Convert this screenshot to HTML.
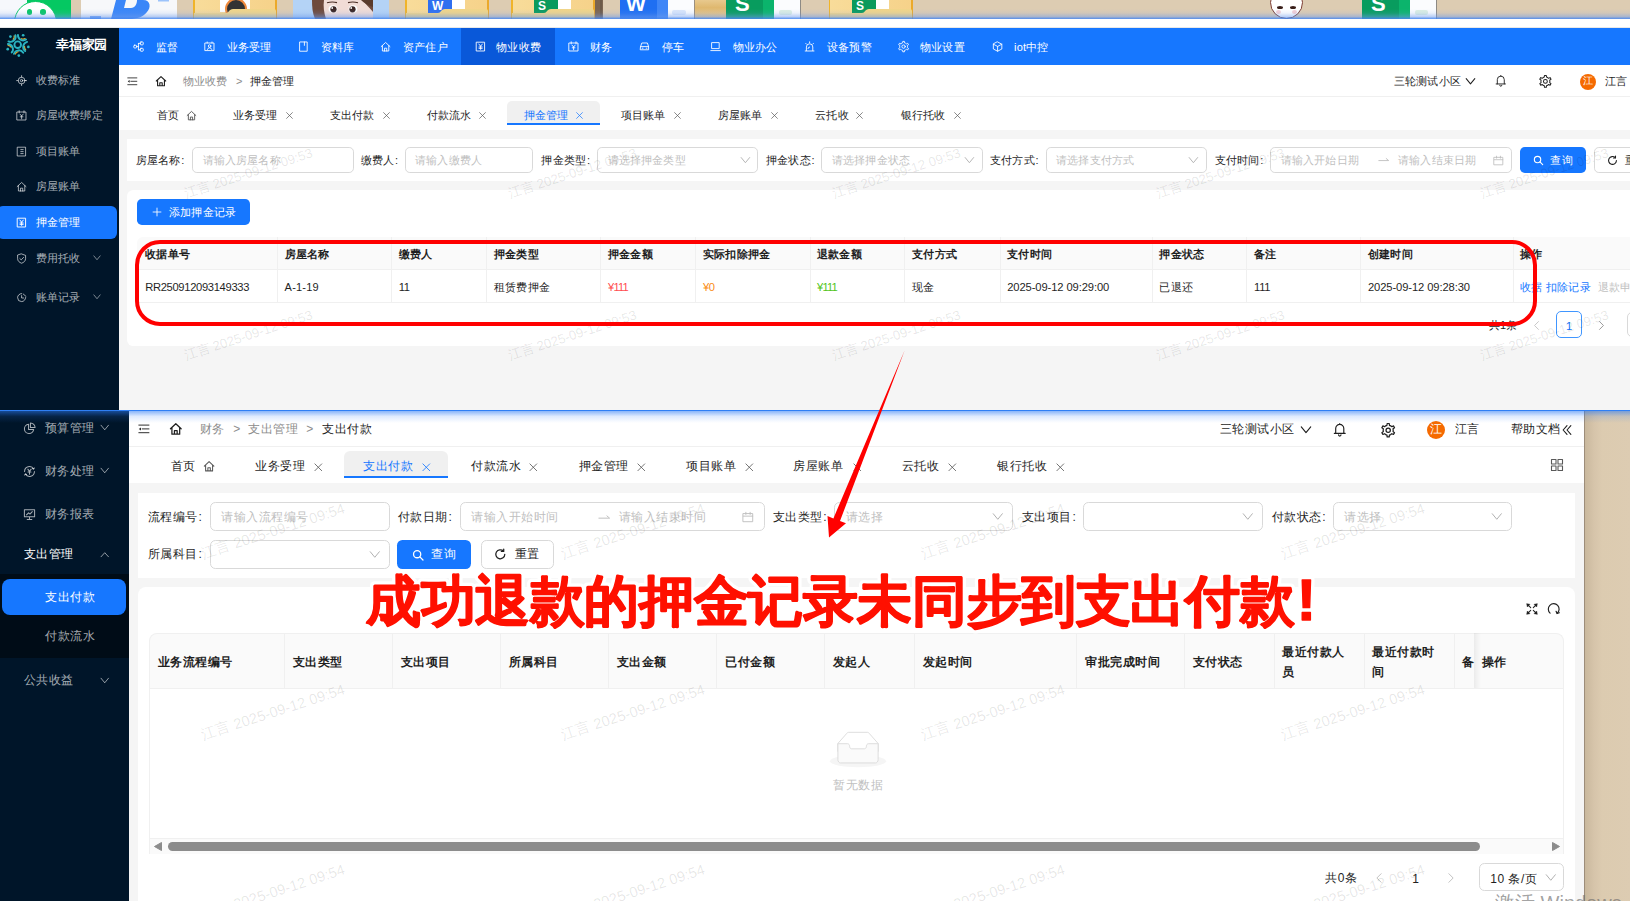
<!DOCTYPE html><html><head><meta charset="utf-8"><style>
html,body{margin:0;padding:0;width:1630px;height:901px;overflow:hidden;background:#fff;font-family:'Liberation Sans', sans-serif;}
.a{position:absolute;box-sizing:border-box;}
.t{position:absolute;white-space:nowrap;line-height:20px;height:20px;}
svg.a{overflow:visible}
</style></head><body>
<div class="a" style="left:0.0px;top:0.0px;width:1630.0px;height:19.0px;background:#ddccb2"></div>
<div class="a" style="left:0.0px;top:0.0px;width:71.0px;height:19.0px;background:#f6f8fc"></div>
<div class="a" style="left:27.0px;top:0.0px;width:44.0px;height:19.0px;background:#05c862"></div>
<div class="a" style="left:14px;top:0.7px;width:43.1px;height:43.1px;border-radius:50%;background:#fff;border:1.8px solid #05c862"></div>
<div class="a" style="left:26.8px;top:9.3px;width:5.4px;height:5.4px;background:#05c862;border-radius:50%"></div>
<div class="a" style="left:40.4px;top:9.3px;width:5.4px;height:5.4px;background:#05c862;border-radius:50%"></div>
<div class="a" style="left:81.0px;top:0.0px;width:96.0px;height:19.0px;background:#f7f8fa"></div>
<svg class="a" style="left:81px;top:0" width="96" height="19" viewBox="0 0 96 19"><path d="M35 0 H62 C70 0 70 8 66 12 C62 17 56 19 48 19 H30 L35 0 Z M45 0 L43 8 H50 C54 8 56 4 56 0 Z" fill="#3a86f8" fill-rule="evenodd"/><rect x="77" y="0" width="11" height="1.5" fill="#9cc3fb"/><rect x="9" y="16" width="11" height="3" fill="#7aa9f5"/></svg>
<div class="a" style="left:193px;top:0;width:84px;height:19px;background:linear-gradient(90deg,#f0b429 0,#f0b429 1.5px,#f8dc9a 1.5px,#f6d28a 82px,#eba92a 82px)"></div>
<div class="a" style="left:220px;top:0;width:30px;height:12px;background:#fff"></div><div class="a" style="left:225px;top:0;width:22px;height:22px;border-radius:50%;border:2.5px solid #f08a3c;background:#333;top:-2px"></div>
<svg class="a" style="left:193px;top:0" width="84" height="19" viewBox="0 0 84 19"><path d="M1 13 H33 C36 13 36 9 40 9 H81 Q83 9 83 11 V19 H1 Z" fill="#f2d688"/></svg>
<div class="a" style="left:293.0px;top:0.0px;width:96.0px;height:19.0px;background:#b4d3f6"></div>
<svg class="a" style="left:293px;top:0" width="96" height="19" viewBox="0 0 96 19"><path d="M19 0 H80 V19 H22 C19.5 13 19 7 19 0 Z" fill="#6e4a3c"/><path d="M31 0 H70 C72 4 77 8 80 12 V19 H33 C31 13 30 6 31 0 Z" fill="#f1dcd6"/><path d="M34 2.8 Q39 1.2 44 2.6 M55 2.6 Q60 1.2 65 2.8" stroke="#4a2e25" stroke-width="1.1" fill="none"/><ellipse cx="40" cy="9" rx="4.4" ry="3.8" fill="#fff"/><ellipse cx="60" cy="9" rx="4.4" ry="3.8" fill="#fff"/><circle cx="40.5" cy="9.3" r="3.1" fill="#3b2624"/><circle cx="59.5" cy="9.3" r="3.1" fill="#3b2624"/><circle cx="39.2" cy="8" r="0.9" fill="#fff"/><circle cx="58.2" cy="8" r="0.9" fill="#fff"/><path d="M68 0 H80 V7 Q73 5 68 0 Z" fill="#5a3b2c"/></svg>
<div class="a" style="left:405px;top:0;width:84px;height:19px;background:linear-gradient(90deg,#f0b429 0,#f0b429 1.5px,#f8dc9a 1.5px,#f6d28a 82px,#eba92a 82px)"></div>
<div class="a" style="left:452px;top:0;width:13px;height:12px;background:#fff"></div><div class="a" style="left:428px;top:0;width:24px;height:13px;background:#2f6ff0;border-radius:0 0 0 0;color:#fff;font-weight:bold;font-size:12px;line-height:13px;text-indent:4px;overflow:hidden">W</div>
<svg class="a" style="left:405px;top:0" width="84" height="19" viewBox="0 0 84 19"><path d="M1 13 H33 C36 13 36 9 40 9 H81 Q83 9 83 11 V19 H1 Z" fill="#f2d688"/></svg>
<div class="a" style="left:511px;top:0;width:84px;height:19px;background:linear-gradient(90deg,#f0b429 0,#f0b429 1.5px,#f8dc9a 1.5px,#f6d28a 82px,#eba92a 82px)"></div>
<div class="a" style="left:558px;top:0;width:13px;height:12px;background:#fff"></div><div class="a" style="left:534px;top:0;width:24px;height:13px;background:#0a9a5c;border-radius:0 0 0 0;color:#fff;font-weight:bold;font-size:12px;line-height:13px;text-indent:4px;overflow:hidden">S</div>
<svg class="a" style="left:511px;top:0" width="84" height="19" viewBox="0 0 84 19"><path d="M1 13 H33 C36 13 36 9 40 9 H81 Q83 9 83 11 V19 H1 Z" fill="#f2d688"/></svg>
<div class="a" style="left:595.0px;top:0.0px;width:8.0px;height:19.0px;background:#7c6550"></div>
<div class="a" style="left:600.0px;top:0.0px;width:2.0px;height:19.0px;background:#6d5a48"></div>
<div class="a" style="left:620.0px;top:0.0px;width:37.0px;height:19.0px;background:#1f6ff2"></div>
<div class="a" style="left:657.0px;top:0.0px;width:11.0px;height:19.0px;background:#3f86f7"></div>
<div class="a" style="left:626px;top:-6px;font-size:21px;font-weight:bold;color:#fff;line-height:20px">W</div>
<div class="a" style="left:668.0px;top:0.0px;width:26.0px;height:19.0px;background:#fbfcfe"></div>
<div class="a" style="left:672.0px;top:10.0px;width:14.0px;height:5.0px;background:#dbe7fb;border-radius:2px"></div>
<div class="a" style="left:694.0px;top:0.0px;width:1.0px;height:19.0px;background:#9a8f80"></div>
<div class="a" style="left:695.0px;top:0.0px;width:31.0px;height:19.0px;background:linear-gradient(180deg,#e8c98e,#dfb86f 40%,#ecd09a)"></div>
<div class="a" style="left:726.0px;top:0.0px;width:37.0px;height:19.0px;background:#089c5e"></div>
<div class="a" style="left:763.0px;top:0.0px;width:11.0px;height:19.0px;background:#0bb46c"></div>
<div class="a" style="left:735px;top:-6px;font-size:22px;font-weight:bold;color:#fff;line-height:20px">S</div>
<div class="a" style="left:774.0px;top:0.0px;width:26.0px;height:19.0px;background:#fbfcfe"></div>
<div class="a" style="left:779.0px;top:10.0px;width:13.0px;height:5.0px;background:#dcefe4;border-radius:2px"></div>
<div class="a" style="left:800.0px;top:0.0px;width:1.0px;height:19.0px;background:#8d8a85"></div>
<div class="a" style="left:829px;top:0;width:84px;height:19px;background:linear-gradient(90deg,#f0b429 0,#f0b429 1.5px,#f8dc9a 1.5px,#f6d28a 82px,#eba92a 82px)"></div>
<div class="a" style="left:876px;top:0;width:13px;height:12px;background:#fff"></div><div class="a" style="left:852px;top:0;width:24px;height:13px;background:#0a9a5c;border-radius:0 0 0 0;color:#fff;font-weight:bold;font-size:12px;line-height:13px;text-indent:4px;overflow:hidden">S</div>
<svg class="a" style="left:829px;top:0" width="84" height="19" viewBox="0 0 84 19"><path d="M1 13 H33 C36 13 36 9 40 9 H81 Q83 9 83 11 V19 H1 Z" fill="#f2d688"/></svg>
<div class="a" style="left:1270px;top:-14px;width:33px;height:33px;border-radius:50%;background:#fff;border:1.2px solid #7a3a30"></div>
<div class="a" style="left:1277.0px;top:6.0px;width:6.0px;height:3.0px;background:#3a1f1a;border-radius:50%"></div>
<div class="a" style="left:1290.0px;top:6.0px;width:6.0px;height:3.0px;background:#3a1f1a;border-radius:50%"></div>
<div class="a" style="left:1276.0px;top:10.0px;width:5.0px;height:4.0px;background:#f6cfd4;border-radius:50%"></div>
<div class="a" style="left:1292.0px;top:10.0px;width:5.0px;height:4.0px;background:#f6cfd4;border-radius:50%"></div>
<div class="a" style="left:1362.0px;top:0.0px;width:37.0px;height:19.0px;background:#089c5e"></div>
<div class="a" style="left:1399.0px;top:0.0px;width:11.0px;height:19.0px;background:#0bb46c"></div>
<div class="a" style="left:1371px;top:-6px;font-size:22px;font-weight:bold;color:#fff;line-height:20px">S</div>
<div class="a" style="left:1410.0px;top:0.0px;width:26.0px;height:19.0px;background:#fbfcfe"></div>
<div class="a" style="left:1415.0px;top:10.0px;width:13.0px;height:5.0px;background:#dcefe4;border-radius:2px"></div>
<div class="a" style="left:1436.0px;top:0.0px;width:1.0px;height:19.0px;background:#8d8a85"></div>
<div class="a" style="left:0.0px;top:9.0px;width:1630.0px;height:10.0px;background:linear-gradient(180deg,rgba(120,160,230,0) 0,rgba(120,160,230,.12) 40%,rgba(110,155,235,.45) 75%,rgba(70,135,240,.9) 100%)"></div>
<div class="a" style="left:0.0px;top:19.0px;width:1630.0px;height:9.0px;background:#fff"></div>
<div class="a" style="left:0.0px;top:27.0px;width:1630.0px;height:1.0px;background:#e8e8e8"></div>
<div class="a" style="left:0.0px;top:28.0px;width:119.0px;height:382.0px;background:#001529"></div>
<svg class="a" style="left:0;top:0" width="40" height="70" viewBox="0 0 40 70"><g fill="none" stroke-linecap="round"><circle cx="17.7" cy="44.7" r="3.3" stroke="#2ab4c2" stroke-width="1.9"/><circle cx="10.41" cy="36.60" r="1.35" fill="#2ab4c2" stroke="none"/><path d="M14.22 35.79 A3.9 3.9 0 0 1 13.26 39.26" stroke="#e0a526" stroke-width="1.3"/><path d="M15.41 35.17 A5.2 5.2 0 0 1 8.46 41.42" stroke="#2ab4c2" stroke-width="1.9"/><circle cx="23.15" cy="35.26" r="1.35" fill="#2ab4c2" stroke="none"/><path d="M25.10 38.64 A3.9 3.9 0 0 1 21.50 38.79" stroke="#e0a526" stroke-width="1.3"/><path d="M26.06 39.57 A5.2 5.2 0 0 1 17.96 34.90" stroke="#2ab4c2" stroke-width="1.9"/><circle cx="28.36" cy="46.97" r="1.35" fill="#2ab4c2" stroke="none"/><path d="M25.75 49.86 A3.9 3.9 0 0 1 24.49 46.49" stroke="#e0a526" stroke-width="1.3"/><path d="M25.16 51.06 A5.2 5.2 0 0 1 27.10 41.92" stroke="#2ab4c2" stroke-width="1.9"/><circle cx="18.84" cy="55.54" r="1.35" fill="#2ab4c2" stroke="none"/><path d="M15.28 53.95 A3.9 3.9 0 0 1 18.10 51.71" stroke="#e0a526" stroke-width="1.3"/><path d="M13.95 53.76 A5.2 5.2 0 0 1 23.25 52.78" stroke="#2ab4c2" stroke-width="1.9"/><circle cx="7.74" cy="49.13" r="1.35" fill="#2ab4c2" stroke="none"/><path d="M8.15 45.25 A3.9 3.9 0 0 1 11.15 47.24" stroke="#e0a526" stroke-width="1.3"/><path d="M7.92 43.94 A5.2 5.2 0 0 1 11.73 52.48" stroke="#2ab4c2" stroke-width="1.9"/></g></svg>
<div class="t" style="left:56.0px;top:34.5px;font-size:13px;letter-spacing:-0.20px;color:#fff;font-weight:bold;">幸福家园</div>
<div class="a" style="left:-3.0px;top:205.8px;width:119.5px;height:33.0px;background:#1677ff;border-radius:6px"></div>
<svg class="a" style="left:16.0px;top:74.6px" width="11.2" height="11.2" viewBox="0 0 14 14"><circle cx="7" cy="7" r="4.2" fill="none" stroke="rgba(255,255,255,0.65)" stroke-width="1.2" stroke-linecap="round" stroke-linejoin="round"/><circle cx="7" cy="7" r="1.5" fill="none" stroke="rgba(255,255,255,0.65)" stroke-width="1.2" stroke-linecap="round" stroke-linejoin="round"/><path d="M7 0.8 V2.8 M7 11.2 V13.2 M0.8 7 H2.8 M11.2 7 H13.2" fill="none" stroke="rgba(255,255,255,0.65)" stroke-width="1.2" stroke-linecap="round" stroke-linejoin="round"/></svg>
<div class="t" style="left:35.7px;top:69.7px;font-size:11px;letter-spacing:0.20px;color:rgba(255,255,255,0.65);font-weight:normal;">收费标准</div>
<svg class="a" style="left:16.0px;top:110.3px" width="11.2" height="11.2" viewBox="0 0 14 14"><path d="M1.5 2.5 H12.5 V12.5 H1.5 Z M4 1 V3.5 M10 1 V3.5" fill="none" stroke="rgba(255,255,255,0.65)" stroke-width="1.2" stroke-linecap="round" stroke-linejoin="round"/><path d="M5 5.2 L7 7.5 L9 5.2 M7 7.5 V11 M5.3 8.5 H8.7" fill="none" stroke="rgba(255,255,255,0.65)" stroke-width="1.2" stroke-linecap="round" stroke-linejoin="round"/></svg>
<div class="t" style="left:35.7px;top:105.4px;font-size:11px;letter-spacing:0.20px;color:rgba(255,255,255,0.65);font-weight:normal;">房屋收费绑定</div>
<svg class="a" style="left:16.0px;top:145.7px" width="11.2" height="11.2" viewBox="0 0 14 14"><path d="M2 1.5 H12 V12.5 H2 Z M6 4.5 H9 M6 7 H9 M6 9.5 H9" fill="none" stroke="rgba(255,255,255,0.65)" stroke-width="1.2" stroke-linecap="round" stroke-linejoin="round"/></svg>
<div class="t" style="left:35.7px;top:140.8px;font-size:11px;letter-spacing:0.20px;color:rgba(255,255,255,0.65);font-weight:normal;">项目账单</div>
<svg class="a" style="left:16.0px;top:181.0px" width="11.2" height="11.2" viewBox="0 0 14 14"><path d="M1.5 7 L7 1.8 L12.5 7 M3 5.8 V12.5 H11 V5.8 M5.6 12.5 V9 H8.4 V12.5" fill="none" stroke="rgba(255,255,255,0.65)" stroke-width="1.2" stroke-linecap="round" stroke-linejoin="round"/></svg>
<div class="t" style="left:35.7px;top:176.1px;font-size:11px;letter-spacing:0.20px;color:rgba(255,255,255,0.65);font-weight:normal;">房屋账单</div>
<svg class="a" style="left:16.0px;top:216.9px" width="11.2" height="11.2" viewBox="0 0 14 14"><path d="M2 1.5 H12 V12.5 H2 Z" fill="none" stroke="#fff" stroke-width="1.2" stroke-linecap="round" stroke-linejoin="round"/><path d="M4.8 3.8 L7 6.5 L9.2 3.8 M7 6.5 V10.5 M5 7.5 H9 M5 9.2 H9" fill="none" stroke="#fff" stroke-width="1.2" stroke-linecap="round" stroke-linejoin="round"/></svg>
<div class="t" style="left:35.7px;top:212.0px;font-size:11px;letter-spacing:0.20px;color:#fff;font-weight:normal;">押金管理</div>
<svg class="a" style="left:16.0px;top:253.1px" width="11.2" height="11.2" viewBox="0 0 14 14"><path d="M7 1.2 L12 3 V7 C12 10 9.8 11.8 7 12.8 C4.2 11.8 2 10 2 7 V3 Z" fill="none" stroke="rgba(255,255,255,0.65)" stroke-width="1.2" stroke-linecap="round" stroke-linejoin="round"/><path d="M4.8 7 L6.5 8.6 L9.5 5.5" fill="none" stroke="rgba(255,255,255,0.65)" stroke-width="1.2" stroke-linecap="round" stroke-linejoin="round"/></svg>
<div class="t" style="left:35.7px;top:248.2px;font-size:11px;letter-spacing:0.20px;color:rgba(255,255,255,0.65);font-weight:normal;">费用托收</div>
<svg class="a" style="left:16.0px;top:291.7px" width="11.2" height="11.2" viewBox="0 0 14 14"><path d="M12 7 A5 5 0 1 1 7 2" fill="none" stroke="rgba(255,255,255,0.65)" stroke-width="1.2" stroke-linecap="round" stroke-linejoin="round"/><path d="M7 4.5 V7.5 H9.5 M9 2.5 L12.5 5.5" fill="none" stroke="rgba(255,255,255,0.65)" stroke-width="1.2" stroke-linecap="round" stroke-linejoin="round"/></svg>
<div class="t" style="left:35.7px;top:286.8px;font-size:11px;letter-spacing:0.20px;color:rgba(255,255,255,0.65);font-weight:normal;">账单记录</div>
<svg class="a" style="left:93.3px;top:254.0px" width="8.0" height="8.0" viewBox="0 0 14 14"><path d="M1.5 3.3 L7 10 L12.5 3.3" fill="none" stroke="rgba(255,255,255,0.65)" stroke-width="1.3" stroke-linecap="round" stroke-linejoin="round"/></svg>
<svg class="a" style="left:93.3px;top:293.0px" width="8.0" height="8.0" viewBox="0 0 14 14"><path d="M1.5 3.3 L7 10 L12.5 3.3" fill="none" stroke="rgba(255,255,255,0.65)" stroke-width="1.3" stroke-linecap="round" stroke-linejoin="round"/></svg>
<div class="a" style="left:119.0px;top:28.0px;width:1511.0px;height:37.0px;background:#1677ff"></div>
<div class="a" style="left:461.0px;top:28.0px;width:94.0px;height:37.0px;background:#0958d9"></div>
<svg class="a" style="left:133.2px;top:41.4px" width="11.2" height="11.2" viewBox="0 0 14 14"><rect x="1" y="5.3" width="3.4" height="3.4" rx="0.8" fill="none" stroke="#fff" stroke-width="1.1" stroke-linecap="round" stroke-linejoin="round"/><rect x="9.2" y="1.2" width="3.6" height="3.6" rx="0.8" fill="none" stroke="#fff" stroke-width="1.1" stroke-linecap="round" stroke-linejoin="round"/><rect x="9.2" y="9.2" width="3.6" height="3.6" rx="0.8" fill="none" stroke="#fff" stroke-width="1.1" stroke-linecap="round" stroke-linejoin="round"/><path d="M4.4 7 H6.8 M6.8 3 V11 M6.8 3 H9.2 M6.8 11 H9.2" fill="none" stroke="#fff" stroke-width="1.1" stroke-linecap="round" stroke-linejoin="round"/></svg>
<div class="t" style="left:155.5px;top:36.9px;font-size:11px;letter-spacing:0.20px;color:#fff;font-weight:normal;">监督</div>
<svg class="a" style="left:203.5px;top:41.4px" width="11.2" height="11.2" viewBox="0 0 14 14"><path d="M1.5 2.5 H12.5 V12 H1.5 Z M4 2.5 V1.2 M10 2.5 V1.2" fill="none" stroke="#fff" stroke-width="1.1" stroke-linecap="round" stroke-linejoin="round"/><circle cx="7" cy="6.3" r="1.6" fill="none" stroke="#fff" stroke-width="1.1" stroke-linecap="round" stroke-linejoin="round"/><path d="M4.3 10.5 A2.8 2.8 0 0 1 9.7 10.5" fill="none" stroke="#fff" stroke-width="1.1" stroke-linecap="round" stroke-linejoin="round"/></svg>
<div class="t" style="left:226.5px;top:36.9px;font-size:11px;letter-spacing:0.20px;color:#fff;font-weight:normal;">业务受理</div>
<svg class="a" style="left:298.0px;top:41.4px" width="11.2" height="11.2" viewBox="0 0 14 14"><path d="M2.5 1.2 H11.5 V12.8 H2.5 Z M8 1.2 V5.5" fill="none" stroke="#fff" stroke-width="1.1" stroke-linecap="round" stroke-linejoin="round"/></svg>
<div class="t" style="left:320.5px;top:36.9px;font-size:11px;letter-spacing:0.20px;color:#fff;font-weight:normal;">资料库</div>
<svg class="a" style="left:380.0px;top:41.4px" width="11.2" height="11.2" viewBox="0 0 14 14"><path d="M1.5 7 L7 1.8 L12.5 7 M3 5.8 V12.5 H11 V5.8 M5.6 12.5 V9 H8.4 V12.5" fill="none" stroke="#fff" stroke-width="1.1" stroke-linecap="round" stroke-linejoin="round"/></svg>
<div class="t" style="left:403.0px;top:36.9px;font-size:11px;letter-spacing:0.20px;color:#fff;font-weight:normal;">资产住户</div>
<svg class="a" style="left:474.6px;top:41.4px" width="11.2" height="11.2" viewBox="0 0 14 14"><path d="M2 1.5 H12 V12.5 H2 Z" fill="none" stroke="#fff" stroke-width="1.1" stroke-linecap="round" stroke-linejoin="round"/><path d="M4.8 3.8 L7 6.5 L9.2 3.8 M7 6.5 V10.5 M5 7.5 H9 M5 9.2 H9" fill="none" stroke="#fff" stroke-width="1.1" stroke-linecap="round" stroke-linejoin="round"/></svg>
<div class="t" style="left:496.3px;top:36.9px;font-size:11px;letter-spacing:0.20px;color:#fff;font-weight:normal;">物业收费</div>
<svg class="a" style="left:568.0px;top:41.4px" width="11.2" height="11.2" viewBox="0 0 14 14"><path d="M1.5 2.5 H12.5 V12.5 H1.5 Z M4 1 V3.5 M10 1 V3.5" fill="none" stroke="#fff" stroke-width="1.1" stroke-linecap="round" stroke-linejoin="round"/><path d="M5 5.2 L7 7.5 L9 5.2 M7 7.5 V11 M5.3 8.5 H8.7" fill="none" stroke="#fff" stroke-width="1.1" stroke-linecap="round" stroke-linejoin="round"/></svg>
<div class="t" style="left:590.0px;top:36.9px;font-size:11px;letter-spacing:0.20px;color:#fff;font-weight:normal;">财务</div>
<svg class="a" style="left:639.0px;top:41.4px" width="11.2" height="11.2" viewBox="0 0 14 14"><path d="M2 7 L3.5 2.5 H10.5 L12 7 V11 H2 Z M2 7 H12 M4 9 H5 M9 9 H10" fill="none" stroke="#fff" stroke-width="1.1" stroke-linecap="round" stroke-linejoin="round"/></svg>
<div class="t" style="left:661.8px;top:36.9px;font-size:11px;letter-spacing:0.20px;color:#fff;font-weight:normal;">停车</div>
<svg class="a" style="left:709.7px;top:41.4px" width="11.2" height="11.2" viewBox="0 0 14 14"><path d="M2.5 2 H11.5 V9.5 H2.5 Z M1 12 H13" fill="none" stroke="#fff" stroke-width="1.1" stroke-linecap="round" stroke-linejoin="round"/></svg>
<div class="t" style="left:732.7px;top:36.9px;font-size:11px;letter-spacing:0.20px;color:#fff;font-weight:normal;">物业办公</div>
<svg class="a" style="left:804.0px;top:41.4px" width="11.2" height="11.2" viewBox="0 0 14 14"><path d="M3 12 V7.5 A4 4 0 0 1 11 7.5 V12 M1.5 12.5 H12.5 M7 1 V2.2 M2.2 3 L3 3.8 M11.8 3 L11 3.8 M5 9.5 A2 2 0 0 1 7 7.5" fill="none" stroke="#fff" stroke-width="1.1" stroke-linecap="round" stroke-linejoin="round"/></svg>
<div class="t" style="left:827.0px;top:36.9px;font-size:11px;letter-spacing:0.20px;color:#fff;font-weight:normal;">设备预警</div>
<svg class="a" style="left:898.0px;top:41.4px" width="11.2" height="11.2" viewBox="0 0 14 14"><path d="M4.55 2.76 L5.81 2.25 L5.97 0.48 L8.03 0.48 L8.19 2.25 L9.45 2.76 L10.52 3.60 L12.13 2.85 L13.16 4.63 L11.71 5.65 L11.90 7.00 L11.71 8.35 L13.16 9.37 L12.13 11.15 L10.52 10.40 L9.45 11.24 L8.19 11.75 L8.03 13.52 L5.97 13.52 L5.81 11.75 L4.55 11.24 L3.48 10.40 L1.87 11.15 L0.84 9.37 L2.29 8.35 L2.10 7.00 L2.29 5.65 L0.84 4.63 L1.87 2.85 L3.48 3.60 Z" fill="none" stroke="#fff" stroke-width="1.1" stroke-linecap="round" stroke-linejoin="round"/><circle cx="7" cy="7" r="2.1" fill="none" stroke="#fff" stroke-width="1.1" stroke-linecap="round" stroke-linejoin="round"/></svg>
<div class="t" style="left:920.0px;top:36.9px;font-size:11px;letter-spacing:0.20px;color:#fff;font-weight:normal;">物业设置</div>
<svg class="a" style="left:992.0px;top:41.4px" width="11.2" height="11.2" viewBox="0 0 14 14"><path d="M7 1.2 L12.3 4 V10 L7 12.8 L1.7 10 V4 Z M1.7 4 L7 6.8 L12.3 4 M7 6.8 V12.8" fill="none" stroke="#fff" stroke-width="1.1" stroke-linecap="round" stroke-linejoin="round"/></svg>
<div class="t" style="left:1014.0px;top:36.9px;font-size:11px;letter-spacing:0.20px;color:#fff;font-weight:normal;">iot中控</div>
<div class="a" style="left:119.0px;top:65.0px;width:1511.0px;height:32.0px;background:#fff"></div>
<div class="a" style="left:119.0px;top:96.0px;width:1511.0px;height:1.0px;background:#f0f0f0"></div>
<svg class="a" style="left:127.4px;top:76.1px" width="10.6" height="10.6" viewBox="0 0 14 14"><path d="M1 2.5 H13 M5 7 H13 M1 11.5 H13" fill="none" stroke="#1f1f1f" stroke-width="1.1" stroke-linecap="round" stroke-linejoin="round"/><path d="M1 7 L3.5 5.2 V8.8 Z" fill="#1f1f1f"/></svg>
<svg class="a" style="left:155.0px;top:75.4px" width="12.0" height="12.0" viewBox="0 0 14 14"><path d="M1.5 7 L7 1.8 L12.5 7 M3 5.8 V12.5 H11 V5.8 M5.6 12.5 V9 H8.4 V12.5" fill="none" stroke="#1f1f1f" stroke-width="1.3" stroke-linecap="round" stroke-linejoin="round"/></svg>
<div class="t" style="left:182.7px;top:70.9px;font-size:11px;letter-spacing:0.20px;color:#8c8c8c;font-weight:normal;">物业收费</div>
<div class="t" style="left:236.0px;top:70.9px;font-size:11px;letter-spacing:0.20px;color:#8c8c8c;font-weight:normal;">&gt;</div>
<div class="t" style="left:249.5px;top:70.9px;font-size:11px;letter-spacing:0.20px;color:#1f1f1f;font-weight:normal;">押金管理</div>
<div class="t" style="left:1393.8px;top:71.1px;font-size:11px;letter-spacing:0.20px;color:#1f1f1f;font-weight:normal;">三轮测试小区</div>
<svg class="a" style="left:1465.0px;top:76.1px" width="11.0" height="11.0" viewBox="0 0 14 14"><path d="M1.5 3.3 L7 10 L12.5 3.3" fill="none" stroke="#1f1f1f" stroke-width="1.3" stroke-linecap="round" stroke-linejoin="round"/></svg>
<svg class="a" style="left:1495.3px;top:75.2px" width="11.6" height="11.6" viewBox="0 0 14 14"><path d="M7 0.6 V1.5 M2.8 10.8 V5.6 A4.2 4.2 0 0 1 11.2 5.6 V10.8 M1.4 10.8 H12.6 M5.7 12.3 A1.3 1.3 0 0 0 8.3 12.3" fill="none" stroke="#1f1f1f" stroke-width="1.1" stroke-linecap="round" stroke-linejoin="round"/></svg>
<svg class="a" style="left:1538.7px;top:75.4px" width="12.8" height="12.8" viewBox="0 0 14 14"><path d="M4.55 2.76 L5.81 2.25 L5.97 0.48 L8.03 0.48 L8.19 2.25 L9.45 2.76 L10.52 3.60 L12.13 2.85 L13.16 4.63 L11.71 5.65 L11.90 7.00 L11.71 8.35 L13.16 9.37 L12.13 11.15 L10.52 10.40 L9.45 11.24 L8.19 11.75 L8.03 13.52 L5.97 13.52 L5.81 11.75 L4.55 11.24 L3.48 10.40 L1.87 11.15 L0.84 9.37 L2.29 8.35 L2.10 7.00 L2.29 5.65 L0.84 4.63 L1.87 2.85 L3.48 3.60 Z" fill="none" stroke="#1f1f1f" stroke-width="1.1" stroke-linecap="round" stroke-linejoin="round"/><circle cx="7" cy="7" r="2.1" fill="none" stroke="#1f1f1f" stroke-width="1.1" stroke-linecap="round" stroke-linejoin="round"/></svg>
<div class="a" style="left:1580.2px;top:73.6px;width:16.0px;height:16.0px;background:#f56a00;border-radius:50%"></div>
<div class="t" style="left:1583.2px;top:71.1px;font-size:10px;color:#fff;font-weight:normal;">江</div>
<div class="t" style="left:1605.0px;top:71.1px;font-size:11px;letter-spacing:0.20px;color:#1f1f1f;font-weight:normal;">江言</div>
<div class="a" style="left:119.0px;top:97.0px;width:1511.0px;height:32.5px;background:#fff"></div>
<div class="a" style="left:507.4px;top:101.3px;width:92.4px;height:23.3px;background:#f0f0f0;border-radius:5px 5px 0 0"></div>
<div class="a" style="left:507.4px;top:122.6px;width:92.4px;height:2.0px;background:#1677ff"></div>
<div class="t" style="left:156.5px;top:104.7px;font-size:11px;letter-spacing:0.20px;color:#1f1f1f;font-weight:normal;">首页</div>
<div class="t" style="left:232.7px;top:104.7px;font-size:11px;letter-spacing:0.20px;color:#1f1f1f;font-weight:normal;">业务受理</div>
<svg class="a" style="left:284.8px;top:111.2px" width="9.0" height="9.0" viewBox="0 0 14 14"><path d="M2.5 2.5 L11.5 11.5 M11.5 2.5 L2.5 11.5" fill="none" stroke="#595959" stroke-width="1.1" stroke-linecap="round" stroke-linejoin="round"/></svg>
<div class="t" style="left:329.7px;top:104.7px;font-size:11px;letter-spacing:0.20px;color:#1f1f1f;font-weight:normal;">支出付款</div>
<svg class="a" style="left:381.8px;top:111.2px" width="9.0" height="9.0" viewBox="0 0 14 14"><path d="M2.5 2.5 L11.5 11.5 M11.5 2.5 L2.5 11.5" fill="none" stroke="#595959" stroke-width="1.1" stroke-linecap="round" stroke-linejoin="round"/></svg>
<div class="t" style="left:426.8px;top:104.7px;font-size:11px;letter-spacing:0.20px;color:#1f1f1f;font-weight:normal;">付款流水</div>
<svg class="a" style="left:478.3px;top:111.2px" width="9.0" height="9.0" viewBox="0 0 14 14"><path d="M2.5 2.5 L11.5 11.5 M11.5 2.5 L2.5 11.5" fill="none" stroke="#595959" stroke-width="1.1" stroke-linecap="round" stroke-linejoin="round"/></svg>
<div class="t" style="left:523.7px;top:104.7px;font-size:11px;letter-spacing:0.20px;color:#1677ff;font-weight:normal;">押金管理</div>
<svg class="a" style="left:575.4px;top:111.2px" width="9.0" height="9.0" viewBox="0 0 14 14"><path d="M2.5 2.5 L11.5 11.5 M11.5 2.5 L2.5 11.5" fill="none" stroke="#1677ff" stroke-width="1.1" stroke-linecap="round" stroke-linejoin="round"/></svg>
<div class="t" style="left:620.8px;top:104.7px;font-size:11px;letter-spacing:0.20px;color:#1f1f1f;font-weight:normal;">项目账单</div>
<svg class="a" style="left:672.5px;top:111.2px" width="9.0" height="9.0" viewBox="0 0 14 14"><path d="M2.5 2.5 L11.5 11.5 M11.5 2.5 L2.5 11.5" fill="none" stroke="#595959" stroke-width="1.1" stroke-linecap="round" stroke-linejoin="round"/></svg>
<div class="t" style="left:717.8px;top:104.7px;font-size:11px;letter-spacing:0.20px;color:#1f1f1f;font-weight:normal;">房屋账单</div>
<svg class="a" style="left:769.5px;top:111.2px" width="9.0" height="9.0" viewBox="0 0 14 14"><path d="M2.5 2.5 L11.5 11.5 M11.5 2.5 L2.5 11.5" fill="none" stroke="#595959" stroke-width="1.1" stroke-linecap="round" stroke-linejoin="round"/></svg>
<div class="t" style="left:815.3px;top:104.7px;font-size:11px;letter-spacing:0.20px;color:#1f1f1f;font-weight:normal;">云托收</div>
<svg class="a" style="left:854.9px;top:111.2px" width="9.0" height="9.0" viewBox="0 0 14 14"><path d="M2.5 2.5 L11.5 11.5 M11.5 2.5 L2.5 11.5" fill="none" stroke="#595959" stroke-width="1.1" stroke-linecap="round" stroke-linejoin="round"/></svg>
<div class="t" style="left:900.8px;top:104.7px;font-size:11px;letter-spacing:0.20px;color:#1f1f1f;font-weight:normal;">银行托收</div>
<svg class="a" style="left:952.5px;top:111.2px" width="9.0" height="9.0" viewBox="0 0 14 14"><path d="M2.5 2.5 L11.5 11.5 M11.5 2.5 L2.5 11.5" fill="none" stroke="#595959" stroke-width="1.1" stroke-linecap="round" stroke-linejoin="round"/></svg>
<svg class="a" style="left:185.5px;top:109.6px" width="11.0" height="11.0" viewBox="0 0 14 14"><path d="M1.5 7 L7 1.8 L12.5 7 M3 5.8 V12.5 H11 V5.8 M5.6 12.5 V9 H8.4 V12.5" fill="none" stroke="#595959" stroke-width="1.2" stroke-linecap="round" stroke-linejoin="round"/></svg>
<div class="a" style="left:119.0px;top:129.5px;width:1511.0px;height:280.5px;background:#f5f5f5"></div>
<div class="a" style="left:127.3px;top:138.8px;width:1502.7px;height:41.8px;background:#fff"></div>
<div class="t" style="left:135.7px;top:149.8px;font-size:11px;letter-spacing:0.20px;color:#1f1f1f;font-weight:normal;">房屋名称<span style="margin-left:0.8px">:</span></div>
<div class="t" style="left:360.6px;top:149.8px;font-size:11px;letter-spacing:0.20px;color:#1f1f1f;font-weight:normal;">缴费人<span style="margin-left:0.8px">:</span></div>
<div class="t" style="left:541.4px;top:149.8px;font-size:11px;letter-spacing:0.20px;color:#1f1f1f;font-weight:normal;">押金类型<span style="margin-left:0.8px">:</span></div>
<div class="t" style="left:766.0px;top:149.8px;font-size:11px;letter-spacing:0.20px;color:#1f1f1f;font-weight:normal;">押金状态<span style="margin-left:0.8px">:</span></div>
<div class="t" style="left:990.0px;top:149.8px;font-size:11px;letter-spacing:0.20px;color:#1f1f1f;font-weight:normal;">支付方式<span style="margin-left:0.8px">:</span></div>
<div class="t" style="left:1214.6px;top:149.8px;font-size:11px;letter-spacing:0.20px;color:#1f1f1f;font-weight:normal;">支付时间<span style="margin-left:0.8px">:</span></div>
<div class="a" style="left:192.4px;top:147.3px;width:161.3px;height:25.9px;border:1px solid #d9d9d9;border-radius:4.8px;background:#fff"></div>
<div class="t" style="left:202.5px;top:149.8px;font-size:11px;letter-spacing:0.20px;color:#bfbfbf;font-weight:normal;">请输入房屋名称</div>
<div class="a" style="left:405.2px;top:147.3px;width:128.3px;height:25.9px;border:1px solid #d9d9d9;border-radius:4.8px;background:#fff"></div>
<div class="t" style="left:415.0px;top:149.8px;font-size:11px;letter-spacing:0.20px;color:#bfbfbf;font-weight:normal;">请输入缴费人</div>
<div class="a" style="left:597.2px;top:147.3px;width:161.2px;height:25.9px;border:1px solid #d9d9d9;border-radius:4.8px;background:#fff"></div>
<div class="t" style="left:607.5px;top:149.8px;font-size:11px;letter-spacing:0.20px;color:#bfbfbf;font-weight:normal;">请选择押金类型</div>
<svg class="a" style="left:740.3px;top:154.9px" width="10.8" height="10.8" viewBox="0 0 14 14"><path d="M1.5 3.3 L7 10 L12.5 3.3" fill="none" stroke="#b0b0b0" stroke-width="1.2" stroke-linecap="round" stroke-linejoin="round"/></svg>
<div class="a" style="left:821.4px;top:147.3px;width:161.2px;height:25.9px;border:1px solid #d9d9d9;border-radius:4.8px;background:#fff"></div>
<div class="t" style="left:831.8px;top:149.8px;font-size:11px;letter-spacing:0.20px;color:#bfbfbf;font-weight:normal;">请选择押金状态</div>
<svg class="a" style="left:964.3px;top:154.9px" width="10.8" height="10.8" viewBox="0 0 14 14"><path d="M1.5 3.3 L7 10 L12.5 3.3" fill="none" stroke="#b0b0b0" stroke-width="1.2" stroke-linecap="round" stroke-linejoin="round"/></svg>
<div class="a" style="left:1045.6px;top:147.3px;width:161.0px;height:25.9px;border:1px solid #d9d9d9;border-radius:4.8px;background:#fff"></div>
<div class="t" style="left:1056.0px;top:149.8px;font-size:11px;letter-spacing:0.20px;color:#bfbfbf;font-weight:normal;">请选择支付方式</div>
<svg class="a" style="left:1188.3px;top:154.9px" width="10.8" height="10.8" viewBox="0 0 14 14"><path d="M1.5 3.3 L7 10 L12.5 3.3" fill="none" stroke="#b0b0b0" stroke-width="1.2" stroke-linecap="round" stroke-linejoin="round"/></svg>
<div class="a" style="left:1269.8px;top:147.3px;width:242.2px;height:25.9px;border:1px solid #d9d9d9;border-radius:4.8px;background:#fff"></div>
<div class="t" style="left:1280.7px;top:149.8px;font-size:11px;letter-spacing:0.20px;color:#bfbfbf;font-weight:normal;">请输入开始日期</div>
<svg class="a" style="left:1378.0px;top:154.3px" width="11.5" height="11.5" viewBox="0 0 14 14"><path d="M1 8 H13 L10 5.5" fill="none" stroke="#bfbfbf" stroke-width="1.1" stroke-linecap="round" stroke-linejoin="round"/></svg>
<div class="t" style="left:1398.0px;top:149.8px;font-size:11px;letter-spacing:0.20px;color:#bfbfbf;font-weight:normal;">请输入结束日期</div>
<svg class="a" style="left:1492.5px;top:154.8px" width="11.0" height="11.0" viewBox="0 0 14 14"><path d="M1.5 3 H12.5 V12.5 H1.5 Z M1.5 6 H12.5 M4.5 1.5 V4 M9.5 1.5 V4" fill="none" stroke="#bfbfbf" stroke-width="1.1" stroke-linecap="round" stroke-linejoin="round"/></svg>
<div class="a" style="left:1519.8px;top:147.3px;width:66.2px;height:25.9px;background:#1677ff;border-radius:4.8px"></div>
<svg class="a" style="left:1533.0px;top:154.7px" width="10.6" height="10.6" viewBox="0 0 14 14"><circle cx="6" cy="6" r="4.2" fill="none" stroke="#fff" stroke-width="1.5" stroke-linecap="round" stroke-linejoin="round"/><path d="M9.2 9.2 L12.8 12.8" fill="none" stroke="#fff" stroke-width="1.5" stroke-linecap="round" stroke-linejoin="round"/></svg>
<div class="t" style="left:1550.4px;top:149.8px;font-size:11px;letter-spacing:0.20px;color:#fff;font-weight:normal;">查询</div>
<div class="a" style="left:1594.2px;top:147.3px;width:85.8px;height:25.9px;border:1px solid #d9d9d9;border-radius:4.8px;background:#fff"></div>
<svg class="a" style="left:1607.0px;top:154.5px" width="11.0" height="11.0" viewBox="0 0 14 14"><path d="M12 7 A5 5 0 1 1 10.5 3.4" fill="none" stroke="#1f1f1f" stroke-width="1.4" stroke-linecap="round" stroke-linejoin="round"/><path d="M10.8 1.2 V3.8 H8.2" fill="none" stroke="#1f1f1f" stroke-width="1.4" stroke-linecap="round" stroke-linejoin="round"/></svg>
<div class="t" style="left:1624.8px;top:149.8px;font-size:11px;letter-spacing:0.20px;color:#1f1f1f;font-weight:normal;">重置</div>
<div class="a" style="left:127.3px;top:189.5px;width:1552.7px;height:156.3px;background:#fff;border-radius:6.4px"></div>
<div class="a" style="left:137.4px;top:199.3px;width:112.4px;height:25.3px;background:#1677ff;border-radius:4.8px"></div>
<svg class="a" style="left:151.5px;top:207.0px" width="10.0" height="10.0" viewBox="0 0 14 14"><path d="M7 1.5 V12.5 M1.5 7 H12.5" fill="none" stroke="#fff" stroke-width="1.2" stroke-linecap="round" stroke-linejoin="round"/></svg>
<div class="t" style="left:169.0px;top:201.5px;font-size:11px;letter-spacing:0.20px;color:#fff;font-weight:normal;">添加押金记录</div>
<div class="a" style="left:137.3px;top:237.3px;width:1542.7px;height:32.3px;background:#fafafa;border-radius:6px 0 0 0"></div>
<div class="a" style="left:137.3px;top:269.2px;width:1542.7px;height:1.0px;background:#f0f0f0"></div>
<div class="a" style="left:137.3px;top:301.7px;width:1542.7px;height:1.0px;background:#f0f0f0"></div>
<div class="a" style="left:276.8px;top:237.3px;width:1.0px;height:64.9px;background:#f0f0f0"></div>
<div class="a" style="left:390.9px;top:237.3px;width:1.0px;height:64.9px;background:#f0f0f0"></div>
<div class="a" style="left:486.0px;top:237.3px;width:1.0px;height:64.9px;background:#f0f0f0"></div>
<div class="a" style="left:599.9px;top:237.3px;width:1.0px;height:64.9px;background:#f0f0f0"></div>
<div class="a" style="left:694.8px;top:237.3px;width:1.0px;height:64.9px;background:#f0f0f0"></div>
<div class="a" style="left:809.5px;top:237.3px;width:1.0px;height:64.9px;background:#f0f0f0"></div>
<div class="a" style="left:903.8px;top:237.3px;width:1.0px;height:64.9px;background:#f0f0f0"></div>
<div class="a" style="left:999.5px;top:237.3px;width:1.0px;height:64.9px;background:#f0f0f0"></div>
<div class="a" style="left:1151.6px;top:237.3px;width:1.0px;height:64.9px;background:#f0f0f0"></div>
<div class="a" style="left:1245.9px;top:237.3px;width:1.0px;height:64.9px;background:#f0f0f0"></div>
<div class="a" style="left:1360.0px;top:237.3px;width:1.0px;height:64.9px;background:#f0f0f0"></div>
<div class="a" style="left:1512.5px;top:237.3px;width:1.0px;height:64.9px;background:#f0f0f0"></div>
<div class="t" style="left:145.2px;top:243.5px;font-size:11px;letter-spacing:0.20px;color:#1f1f1f;font-weight:bold;">收据单号</div>
<div class="t" style="left:284.6px;top:243.5px;font-size:11px;letter-spacing:0.20px;color:#1f1f1f;font-weight:bold;">房屋名称</div>
<div class="t" style="left:398.7px;top:243.5px;font-size:11px;letter-spacing:0.20px;color:#1f1f1f;font-weight:bold;">缴费人</div>
<div class="t" style="left:494.0px;top:243.5px;font-size:11px;letter-spacing:0.20px;color:#1f1f1f;font-weight:bold;">押金类型</div>
<div class="t" style="left:608.1px;top:243.5px;font-size:11px;letter-spacing:0.20px;color:#1f1f1f;font-weight:bold;">押金金额</div>
<div class="t" style="left:703.0px;top:243.5px;font-size:11px;letter-spacing:0.20px;color:#1f1f1f;font-weight:bold;">实际扣除押金</div>
<div class="t" style="left:817.1px;top:243.5px;font-size:11px;letter-spacing:0.20px;color:#1f1f1f;font-weight:bold;">退款金额</div>
<div class="t" style="left:912.2px;top:243.5px;font-size:11px;letter-spacing:0.20px;color:#1f1f1f;font-weight:bold;">支付方式</div>
<div class="t" style="left:1007.2px;top:243.5px;font-size:11px;letter-spacing:0.20px;color:#1f1f1f;font-weight:bold;">支付时间</div>
<div class="t" style="left:1159.4px;top:243.5px;font-size:11px;letter-spacing:0.20px;color:#1f1f1f;font-weight:bold;">押金状态</div>
<div class="t" style="left:1254.1px;top:243.5px;font-size:11px;letter-spacing:0.20px;color:#1f1f1f;font-weight:bold;">备注</div>
<div class="t" style="left:1368.0px;top:243.5px;font-size:11px;letter-spacing:0.20px;color:#1f1f1f;font-weight:bold;">创建时间</div>
<div class="t" style="left:1519.8px;top:243.5px;font-size:11px;letter-spacing:0.20px;color:#1f1f1f;font-weight:bold;">操作</div>
<div class="t" style="left:145.2px;top:276.6px;font-size:11.2px;color:#1f1f1f;font-weight:normal;letter-spacing:-0.33px;">RR250912093149333</div>
<div class="t" style="left:284.6px;top:276.6px;font-size:11px;letter-spacing:0.20px;color:#1f1f1f;font-weight:normal;">A-1-19</div>
<div class="t" style="left:398.7px;top:276.6px;font-size:11.2px;color:#1f1f1f;font-weight:normal;letter-spacing:-0.3px;">11</div>
<div class="t" style="left:494.0px;top:276.6px;font-size:11px;letter-spacing:0.20px;color:#1f1f1f;font-weight:normal;">租赁费押金</div>
<div class="t" style="left:608.1px;top:276.6px;font-size:11.2px;color:#ff4d4f;font-weight:normal;letter-spacing:-0.9px;">¥111</div>
<div class="t" style="left:703.0px;top:276.6px;font-size:11.2px;color:#fa8c16;font-weight:normal;letter-spacing:-0.5px;">¥0</div>
<div class="t" style="left:817.1px;top:276.6px;font-size:11.2px;color:#52c41a;font-weight:normal;letter-spacing:-0.9px;">¥111</div>
<div class="t" style="left:912.2px;top:276.6px;font-size:11px;letter-spacing:0.20px;color:#1f1f1f;font-weight:normal;">现金</div>
<div class="t" style="left:1007.2px;top:276.6px;font-size:11.2px;color:#1f1f1f;font-weight:normal;letter-spacing:-0.1px;">2025-09-12 09:29:00</div>
<div class="t" style="left:1159.4px;top:276.6px;font-size:11px;letter-spacing:0.20px;color:#1f1f1f;font-weight:normal;">已退还</div>
<div class="t" style="left:1254.1px;top:276.6px;font-size:11.2px;color:#1f1f1f;font-weight:normal;letter-spacing:-0.3px;">111</div>
<div class="t" style="left:1368.0px;top:276.6px;font-size:11.2px;color:#1f1f1f;font-weight:normal;letter-spacing:-0.1px;">2025-09-12 09:28:30</div>
<div class="t" style="left:1519.8px;top:276.6px;font-size:11px;letter-spacing:0.20px;color:#1677ff;font-weight:normal;">收据</div>
<div class="t" style="left:1546.0px;top:276.6px;font-size:11px;letter-spacing:0.20px;color:#1677ff;font-weight:normal;">扣除记录</div>
<div class="t" style="left:1598.0px;top:276.6px;font-size:11px;letter-spacing:0.20px;color:#bfbfbf;font-weight:normal;">退款申请</div>
<div class="t" style="left:1488.7px;top:314.9px;font-size:11px;letter-spacing:0.20px;color:#1f1f1f;font-weight:normal;">共1条</div>
<svg class="a" style="left:1531.0px;top:319.5px" width="11.0" height="11.0" viewBox="0 0 14 14"><path d="M9.5 2 L4.5 7 L9.5 12" fill="none" stroke="#bfbfbf" stroke-width="1.1" stroke-linecap="round" stroke-linejoin="round"/></svg>
<div class="a" style="left:1555.8px;top:311.2px;width:26.2px;height:26.5px;border:1px solid #4096ff;border-radius:5px;background:#fff"></div>
<div class="t" style="left:1566.0px;top:315.5px;font-size:11.2px;color:#1677ff;font-weight:normal;">1</div>
<svg class="a" style="left:1596.0px;top:319.5px" width="11.0" height="11.0" viewBox="0 0 14 14"><path d="M4.5 2 L9.5 7 L4.5 12" fill="none" stroke="#8c8c8c" stroke-width="1.1" stroke-linecap="round" stroke-linejoin="round"/></svg>
<div class="a" style="left:1627.3px;top:311.7px;width:52.7px;height:25.3px;border:1px solid #d9d9d9;border-radius:5px;background:#fff"></div>
<div class="a" style="left:0.0px;top:410.0px;width:129.0px;height:491.0px;background:#001529"></div>
<div class="a" style="left:0.0px;top:574.3px;width:129.0px;height:83.8px;background:#000c17"></div>
<div class="a" style="left:2.0px;top:579.2px;width:123.8px;height:35.4px;background:#1677ff;border-radius:8px"></div>
<svg class="a" style="left:22.7px;top:421.6px" width="13.0" height="13.0" viewBox="0 0 14 14"><path d="M6 2.5 A5 5 0 1 0 11.5 8 H6 Z" fill="none" stroke="rgba(255,255,255,0.65)" stroke-width="1.1" stroke-linecap="round" stroke-linejoin="round"/><path d="M8 1 V6 H13 A5 5 0 0 0 8 1 Z" fill="none" stroke="rgba(255,255,255,0.65)" stroke-width="1.1" stroke-linecap="round" stroke-linejoin="round"/></svg>
<div class="t" style="left:44.8px;top:417.6px;font-size:12px;letter-spacing:0.50px;color:rgba(255,255,255,0.65);font-weight:normal;">预算管理</div>
<svg class="a" style="left:100.0px;top:423.1px" width="9.5" height="9.5" viewBox="0 0 14 14"><path d="M1.5 3.3 L7 10 L12.5 3.3" fill="none" stroke="rgba(255,255,255,0.65)" stroke-width="1.3" stroke-linecap="round" stroke-linejoin="round"/></svg>
<svg class="a" style="left:22.7px;top:464.6px" width="13.0" height="13.0" viewBox="0 0 14 14"><path d="M12.3 7 A5.3 5.3 0 0 1 2.5 9.8 M1.7 7 A5.3 5.3 0 0 1 11.5 4.2" fill="none" stroke="rgba(255,255,255,0.65)" stroke-width="1.1" stroke-linecap="round" stroke-linejoin="round"/><path d="M1.8 10.8 L2.5 9.8 L3.8 10.3 M12.2 3.2 L11.5 4.2 L10.2 3.7" fill="none" stroke="rgba(255,255,255,0.65)" stroke-width="1.1" stroke-linecap="round" stroke-linejoin="round"/><path d="M5.2 4.5 L7 6.8 L8.8 4.5 M7 6.8 V10 M5.4 7.6 H8.6" fill="none" stroke="rgba(255,255,255,0.65)" stroke-width="1.1" stroke-linecap="round" stroke-linejoin="round"/></svg>
<div class="t" style="left:44.8px;top:460.6px;font-size:12px;letter-spacing:0.50px;color:rgba(255,255,255,0.65);font-weight:normal;">财务处理</div>
<svg class="a" style="left:100.0px;top:466.1px" width="9.5" height="9.5" viewBox="0 0 14 14"><path d="M1.5 3.3 L7 10 L12.5 3.3" fill="none" stroke="rgba(255,255,255,0.65)" stroke-width="1.3" stroke-linecap="round" stroke-linejoin="round"/></svg>
<svg class="a" style="left:22.7px;top:507.9px" width="13.0" height="13.0" viewBox="0 0 14 14"><path d="M1.5 2 H12.5 V9.5 H1.5 Z M7 9.5 V12 M4.5 12.5 H9.5 M3.8 7.5 L6 5.2 L7.5 6.5 L10 3.8" fill="none" stroke="rgba(255,255,255,0.65)" stroke-width="1.1" stroke-linecap="round" stroke-linejoin="round"/></svg>
<div class="t" style="left:44.8px;top:503.9px;font-size:12px;letter-spacing:0.50px;color:rgba(255,255,255,0.65);font-weight:normal;">财务报表</div>
<div class="t" style="left:23.7px;top:544.2px;font-size:12px;letter-spacing:0.50px;color:#fff;font-weight:500;">支出管理</div>
<svg class="a" style="left:100.0px;top:549.9px" width="9.5" height="9.5" viewBox="0 0 14 14"><path d="M1.5 10 L7 4 L12.5 10" fill="none" stroke="rgba(255,255,255,0.65)" stroke-width="1.3" stroke-linecap="round" stroke-linejoin="round"/></svg>
<div class="t" style="left:45.2px;top:587.0px;font-size:12px;letter-spacing:0.50px;color:#fff;font-weight:normal;">支出付款</div>
<div class="t" style="left:45.2px;top:626.1px;font-size:12px;letter-spacing:0.50px;color:rgba(255,255,255,0.65);font-weight:normal;">付款流水</div>
<div class="t" style="left:23.7px;top:670.1px;font-size:12px;letter-spacing:0.50px;color:rgba(255,255,255,0.65);font-weight:normal;">公共收益</div>
<svg class="a" style="left:100.0px;top:675.8px" width="9.5" height="9.5" viewBox="0 0 14 14"><path d="M1.5 3.3 L7 10 L12.5 3.3" fill="none" stroke="rgba(255,255,255,0.65)" stroke-width="1.3" stroke-linecap="round" stroke-linejoin="round"/></svg>
<div class="a" style="left:129.0px;top:410.0px;width:1455.0px;height:36.5px;background:#fff"></div>
<div class="a" style="left:129.0px;top:446.0px;width:1455.0px;height:1.0px;background:#f0f0f0"></div>
<svg class="a" style="left:138.4px;top:423.2px" width="11.8" height="11.8" viewBox="0 0 14 14"><path d="M1 2.5 H13 M5 7 H13 M1 11.5 H13" fill="none" stroke="#1f1f1f" stroke-width="1.1" stroke-linecap="round" stroke-linejoin="round"/><path d="M1 7 L3.5 5.2 V8.8 Z" fill="#1f1f1f"/></svg>
<svg class="a" style="left:168.6px;top:422.4px" width="13.6" height="13.6" viewBox="0 0 14 14"><path d="M1.5 7 L7 1.8 L12.5 7 M3 5.8 V12.5 H11 V5.8 M5.6 12.5 V9 H8.4 V12.5" fill="none" stroke="#1f1f1f" stroke-width="1.3" stroke-linecap="round" stroke-linejoin="round"/></svg>
<div class="t" style="left:199.5px;top:418.7px;font-size:12px;letter-spacing:0.50px;color:#8c8c8c;font-weight:normal;">财务</div>
<div class="t" style="left:233.3px;top:418.7px;font-size:12px;letter-spacing:0.50px;color:#8c8c8c;font-weight:normal;">&gt;</div>
<div class="t" style="left:248.3px;top:418.7px;font-size:12px;letter-spacing:0.50px;color:#8c8c8c;font-weight:normal;">支出管理</div>
<div class="t" style="left:306.3px;top:418.7px;font-size:12px;letter-spacing:0.50px;color:#8c8c8c;font-weight:normal;">&gt;</div>
<div class="t" style="left:322.0px;top:418.7px;font-size:12px;letter-spacing:0.50px;color:#1f1f1f;font-weight:normal;">支出付款</div>
<div class="t" style="left:1219.8px;top:419.3px;font-size:12px;letter-spacing:0.50px;color:#1f1f1f;font-weight:normal;">三轮测试小区</div>
<svg class="a" style="left:1299.5px;top:423.8px" width="12.0" height="12.0" viewBox="0 0 14 14"><path d="M1.5 3.3 L7 10 L12.5 3.3" fill="none" stroke="#1f1f1f" stroke-width="1.3" stroke-linecap="round" stroke-linejoin="round"/></svg>
<svg class="a" style="left:1332.5px;top:422.5px" width="13.5" height="13.5" viewBox="0 0 14 14"><path d="M7 0.6 V1.5 M2.8 10.8 V5.6 A4.2 4.2 0 0 1 11.2 5.6 V10.8 M1.4 10.8 H12.6 M5.7 12.3 A1.3 1.3 0 0 0 8.3 12.3" fill="none" stroke="#1f1f1f" stroke-width="1.2" stroke-linecap="round" stroke-linejoin="round"/></svg>
<svg class="a" style="left:1380.7px;top:422.7px" width="14.4" height="14.4" viewBox="0 0 14 14"><path d="M4.55 2.76 L5.81 2.25 L5.97 0.48 L8.03 0.48 L8.19 2.25 L9.45 2.76 L10.52 3.60 L12.13 2.85 L13.16 4.63 L11.71 5.65 L11.90 7.00 L11.71 8.35 L13.16 9.37 L12.13 11.15 L10.52 10.40 L9.45 11.24 L8.19 11.75 L8.03 13.52 L5.97 13.52 L5.81 11.75 L4.55 11.24 L3.48 10.40 L1.87 11.15 L0.84 9.37 L2.29 8.35 L2.10 7.00 L2.29 5.65 L0.84 4.63 L1.87 2.85 L3.48 3.60 Z" fill="none" stroke="#1f1f1f" stroke-width="1.2" stroke-linecap="round" stroke-linejoin="round"/><circle cx="7" cy="7" r="2.1" fill="none" stroke="#1f1f1f" stroke-width="1.2" stroke-linecap="round" stroke-linejoin="round"/></svg>
<div class="a" style="left:1426.9px;top:420.8px;width:18.0px;height:18.0px;background:#f56a00;border-radius:50%"></div>
<div class="t" style="left:1430.2px;top:419.3px;font-size:12px;letter-spacing:-0.50px;color:#fff;font-weight:normal;">江</div>
<div class="t" style="left:1454.6px;top:419.3px;font-size:12px;letter-spacing:0.50px;color:#1f1f1f;font-weight:normal;">江言</div>
<div class="t" style="left:1510.8px;top:419.3px;font-size:12px;letter-spacing:0.50px;color:#1f1f1f;font-weight:normal;">帮助文档</div>
<svg class="a" style="left:1561.0px;top:423.8px" width="12.0" height="12.0" viewBox="0 0 14 14"><path d="M7 2 L2.5 7 L7 12 M11.5 2 L7 7 L11.5 12" fill="none" stroke="#1f1f1f" stroke-width="1.3" stroke-linecap="round" stroke-linejoin="round"/></svg>
<div class="a" style="left:129.0px;top:447.0px;width:1455.0px;height:36.0px;background:#fff"></div>
<div class="a" style="left:344.4px;top:451.3px;width:103.5px;height:26.5px;background:#f0f0f0;border-radius:6px 6px 0 0"></div>
<div class="a" style="left:344.4px;top:475.7px;width:103.5px;height:2.1px;background:#1677ff"></div>
<div class="t" style="left:170.7px;top:455.9px;font-size:12px;letter-spacing:0.50px;color:#1f1f1f;font-weight:normal;">首页</div>
<div class="t" style="left:255.2px;top:455.9px;font-size:12px;letter-spacing:0.50px;color:#1f1f1f;font-weight:normal;">业务受理</div>
<svg class="a" style="left:312.9px;top:461.6px" width="10.6" height="10.6" viewBox="0 0 14 14"><path d="M2.5 2.5 L11.5 11.5 M11.5 2.5 L2.5 11.5" fill="none" stroke="#595959" stroke-width="1.1" stroke-linecap="round" stroke-linejoin="round"/></svg>
<div class="t" style="left:363.2px;top:455.9px;font-size:12px;letter-spacing:0.50px;color:#1677ff;font-weight:normal;">支出付款</div>
<svg class="a" style="left:420.9px;top:461.6px" width="10.6" height="10.6" viewBox="0 0 14 14"><path d="M2.5 2.5 L11.5 11.5 M11.5 2.5 L2.5 11.5" fill="none" stroke="#1677ff" stroke-width="1.1" stroke-linecap="round" stroke-linejoin="round"/></svg>
<div class="t" style="left:471.0px;top:455.9px;font-size:12px;letter-spacing:0.50px;color:#1f1f1f;font-weight:normal;">付款流水</div>
<svg class="a" style="left:527.8px;top:461.6px" width="10.6" height="10.6" viewBox="0 0 14 14"><path d="M2.5 2.5 L11.5 11.5 M11.5 2.5 L2.5 11.5" fill="none" stroke="#595959" stroke-width="1.1" stroke-linecap="round" stroke-linejoin="round"/></svg>
<div class="t" style="left:578.6px;top:455.9px;font-size:12px;letter-spacing:0.50px;color:#1f1f1f;font-weight:normal;">押金管理</div>
<svg class="a" style="left:636.3px;top:461.6px" width="10.6" height="10.6" viewBox="0 0 14 14"><path d="M2.5 2.5 L11.5 11.5 M11.5 2.5 L2.5 11.5" fill="none" stroke="#595959" stroke-width="1.1" stroke-linecap="round" stroke-linejoin="round"/></svg>
<div class="t" style="left:686.4px;top:455.9px;font-size:12px;letter-spacing:0.50px;color:#1f1f1f;font-weight:normal;">项目账单</div>
<svg class="a" style="left:744.3px;top:461.6px" width="10.6" height="10.6" viewBox="0 0 14 14"><path d="M2.5 2.5 L11.5 11.5 M11.5 2.5 L2.5 11.5" fill="none" stroke="#595959" stroke-width="1.1" stroke-linecap="round" stroke-linejoin="round"/></svg>
<div class="t" style="left:793.4px;top:455.9px;font-size:12px;letter-spacing:0.50px;color:#1f1f1f;font-weight:normal;">房屋账单</div>
<svg class="a" style="left:852.1px;top:461.6px" width="10.6" height="10.6" viewBox="0 0 14 14"><path d="M2.5 2.5 L11.5 11.5 M11.5 2.5 L2.5 11.5" fill="none" stroke="#595959" stroke-width="1.1" stroke-linecap="round" stroke-linejoin="round"/></svg>
<div class="t" style="left:901.8px;top:455.9px;font-size:12px;letter-spacing:0.50px;color:#1f1f1f;font-weight:normal;">云托收</div>
<svg class="a" style="left:947.0px;top:461.6px" width="10.6" height="10.6" viewBox="0 0 14 14"><path d="M2.5 2.5 L11.5 11.5 M11.5 2.5 L2.5 11.5" fill="none" stroke="#595959" stroke-width="1.1" stroke-linecap="round" stroke-linejoin="round"/></svg>
<div class="t" style="left:997.3px;top:455.9px;font-size:12px;letter-spacing:0.50px;color:#1f1f1f;font-weight:normal;">银行托收</div>
<svg class="a" style="left:1054.9px;top:461.6px" width="10.6" height="10.6" viewBox="0 0 14 14"><path d="M2.5 2.5 L11.5 11.5 M11.5 2.5 L2.5 11.5" fill="none" stroke="#595959" stroke-width="1.1" stroke-linecap="round" stroke-linejoin="round"/></svg>
<svg class="a" style="left:202.5px;top:460.2px" width="12.2" height="12.2" viewBox="0 0 14 14"><path d="M1.5 7 L7 1.8 L12.5 7 M3 5.8 V12.5 H11 V5.8 M5.6 12.5 V9 H8.4 V12.5" fill="none" stroke="#595959" stroke-width="1.2" stroke-linecap="round" stroke-linejoin="round"/></svg>
<svg class="a" style="left:1549.7px;top:458.4px" width="14.0" height="14.0" viewBox="0 0 14 14"><path d="M1.5 1.5 H6 V6 H1.5 Z M8 1.5 H12.5 V6 H8 Z M1.5 8 H6 V12.5 H1.5 Z M8 8 H12.5 V12.5 H8 Z" fill="none" stroke="#595959" stroke-width="1.1" stroke-linecap="round" stroke-linejoin="round"/></svg>
<div class="a" style="left:129.0px;top:483.0px;width:1455.0px;height:418.0px;background:#f5f5f5"></div>
<div class="a" style="left:138.4px;top:492.9px;width:1436.4px;height:84.8px;background:#fff"></div>
<div class="t" style="left:147.8px;top:506.9px;font-size:12px;letter-spacing:0.50px;color:#1f1f1f;font-weight:normal;">流程编号<span style="margin-left:0.8px">:</span></div>
<div class="t" style="left:397.6px;top:506.9px;font-size:12px;letter-spacing:0.50px;color:#1f1f1f;font-weight:normal;">付款日期<span style="margin-left:0.8px">:</span></div>
<div class="t" style="left:772.5px;top:506.9px;font-size:12px;letter-spacing:0.50px;color:#1f1f1f;font-weight:normal;">支出类型<span style="margin-left:0.8px">:</span></div>
<div class="t" style="left:1021.8px;top:506.9px;font-size:12px;letter-spacing:0.50px;color:#1f1f1f;font-weight:normal;">支出项目<span style="margin-left:0.8px">:</span></div>
<div class="t" style="left:1271.5px;top:506.9px;font-size:12px;letter-spacing:0.50px;color:#1f1f1f;font-weight:normal;">付款状态<span style="margin-left:0.8px">:</span></div>
<div class="t" style="left:147.8px;top:544.4px;font-size:12px;letter-spacing:0.50px;color:#1f1f1f;font-weight:normal;">所属科目<span style="margin-left:0.8px">:</span></div>
<div class="a" style="left:210.4px;top:502.3px;width:179.4px;height:28.8px;border:1px solid #d9d9d9;border-radius:5.4px;background:#fff"></div>
<div class="t" style="left:221.2px;top:506.9px;font-size:12px;letter-spacing:0.50px;color:#bfbfbf;font-weight:normal;">请输入流程编号</div>
<div class="a" style="left:459.7px;top:502.3px;width:305.1px;height:28.8px;border:1px solid #d9d9d9;border-radius:5.4px;background:#fff"></div>
<div class="t" style="left:471.0px;top:506.9px;font-size:12px;letter-spacing:0.50px;color:#bfbfbf;font-weight:normal;">请输入开始时间</div>
<svg class="a" style="left:598.0px;top:510.6px" width="12.5" height="12.5" viewBox="0 0 14 14"><path d="M1 8 H13 L10 5.5" fill="none" stroke="#bfbfbf" stroke-width="1.1" stroke-linecap="round" stroke-linejoin="round"/></svg>
<div class="t" style="left:618.8px;top:506.9px;font-size:12px;letter-spacing:0.50px;color:#bfbfbf;font-weight:normal;">请输入结束时间</div>
<svg class="a" style="left:741.5px;top:511.4px" width="12.0" height="12.0" viewBox="0 0 14 14"><path d="M1.5 3 H12.5 V12.5 H1.5 Z M1.5 6 H12.5 M4.5 1.5 V4 M9.5 1.5 V4" fill="none" stroke="#bfbfbf" stroke-width="1.1" stroke-linecap="round" stroke-linejoin="round"/></svg>
<div class="a" style="left:834.0px;top:502.3px;width:179.4px;height:28.8px;border:1px solid #d9d9d9;border-radius:5.4px;background:#fff"></div>
<div class="t" style="left:845.5px;top:506.9px;font-size:12px;letter-spacing:0.50px;color:#bfbfbf;font-weight:normal;">请选择</div>
<svg class="a" style="left:992.2px;top:510.9px" width="11.6" height="11.6" viewBox="0 0 14 14"><path d="M1.5 3.3 L7 10 L12.5 3.3" fill="none" stroke="#b0b0b0" stroke-width="1.2" stroke-linecap="round" stroke-linejoin="round"/></svg>
<div class="a" style="left:1083.3px;top:502.3px;width:179.3px;height:28.8px;border:1px solid #d9d9d9;border-radius:5.4px;background:#fff"></div>
<svg class="a" style="left:1242.0px;top:510.9px" width="11.6" height="11.6" viewBox="0 0 14 14"><path d="M1.5 3.3 L7 10 L12.5 3.3" fill="none" stroke="#b0b0b0" stroke-width="1.2" stroke-linecap="round" stroke-linejoin="round"/></svg>
<div class="a" style="left:1333.4px;top:502.3px;width:179.1px;height:28.8px;border:1px solid #d9d9d9;border-radius:5.4px;background:#fff"></div>
<div class="t" style="left:1344.3px;top:506.9px;font-size:12px;letter-spacing:0.50px;color:#bfbfbf;font-weight:normal;">请选择</div>
<svg class="a" style="left:1491.2px;top:510.9px" width="11.6" height="11.6" viewBox="0 0 14 14"><path d="M1.5 3.3 L7 10 L12.5 3.3" fill="none" stroke="#b0b0b0" stroke-width="1.2" stroke-linecap="round" stroke-linejoin="round"/></svg>
<div class="a" style="left:210.4px;top:540.3px;width:179.4px;height:28.8px;border:1px solid #d9d9d9;border-radius:5.4px;background:#fff"></div>
<svg class="a" style="left:368.5px;top:548.5px" width="11.6" height="11.6" viewBox="0 0 14 14"><path d="M1.5 3.3 L7 10 L12.5 3.3" fill="none" stroke="#b0b0b0" stroke-width="1.2" stroke-linecap="round" stroke-linejoin="round"/></svg>
<div class="a" style="left:397.2px;top:540.3px;width:73.5px;height:28.8px;background:#1677ff;border-radius:5.4px"></div>
<svg class="a" style="left:411.5px;top:548.5px" width="12.0" height="12.0" viewBox="0 0 14 14"><circle cx="6" cy="6" r="4.2" fill="none" stroke="#fff" stroke-width="1.5" stroke-linecap="round" stroke-linejoin="round"/><path d="M9.2 9.2 L12.8 12.8" fill="none" stroke="#fff" stroke-width="1.5" stroke-linecap="round" stroke-linejoin="round"/></svg>
<div class="t" style="left:431.0px;top:544.4px;font-size:12px;letter-spacing:0.50px;color:#fff;font-weight:normal;">查询</div>
<div class="a" style="left:480.5px;top:540.3px;width:73.0px;height:28.8px;border:1px solid #d9d9d9;border-radius:5.4px;background:#fff"></div>
<svg class="a" style="left:494.0px;top:548.2px" width="12.6" height="12.6" viewBox="0 0 14 14"><path d="M12 7 A5 5 0 1 1 10.5 3.4" fill="none" stroke="#1f1f1f" stroke-width="1.4" stroke-linecap="round" stroke-linejoin="round"/><path d="M10.8 1.2 V3.8 H8.2" fill="none" stroke="#1f1f1f" stroke-width="1.4" stroke-linecap="round" stroke-linejoin="round"/></svg>
<div class="t" style="left:514.5px;top:544.4px;font-size:12px;letter-spacing:0.50px;color:#1f1f1f;font-weight:normal;">重置</div>
<div class="a" style="left:138.4px;top:587.3px;width:1436.4px;height:332.7px;background:#fff;border-radius:8px"></div>
<svg class="a" style="left:1526.0px;top:603.0px" width="12.0" height="12.0" viewBox="0 0 14 14"><path d="M5.5 5.5 L1.8 1.8 M8.5 5.5 L12.2 1.8 M5.5 8.5 L1.8 12.2 M8.5 8.5 L12.2 12.2" fill="none" stroke="#1f1f1f" stroke-width="1.2" stroke-linecap="round" stroke-linejoin="round"/><path d="M0.8 0.8 L4.6 1.6 L1.6 4.6 Z M13.2 0.8 L9.4 1.6 L12.4 4.6 Z M0.8 13.2 L4.6 12.4 L1.6 9.4 Z M13.2 13.2 L9.4 12.4 L12.4 9.4 Z" fill="#1f1f1f" stroke="#1f1f1f" stroke-width="0.6" stroke-linejoin="round"/></svg>
<svg class="a" style="left:1546.5px;top:602.3px" width="13.5" height="13.5" viewBox="0 0 14 14"><path d="M3.2 11.5 A5.6 5.6 0 1 1 10.6 11.6" fill="none" stroke="#1f1f1f" stroke-width="1.2" stroke-linecap="round" stroke-linejoin="round"/><path d="M9.4 9.6 L10.4 12 L12.8 11.2" fill="none" stroke="#1f1f1f" stroke-width="1.2" stroke-linecap="round" stroke-linejoin="round"/></svg>
<div class="a" style="left:149.4px;top:633.2px;width:1414.2px;height:55.3px;background:#fafafa;border-radius:8px 8px 0 0;border-top:1px solid #f0f0f0;border-left:1px solid #f0f0f0;border-right:1px solid #f0f0f0"></div>
<div class="a" style="left:149.4px;top:688.0px;width:1414.2px;height:1.0px;background:#f0f0f0"></div>
<div class="a" style="left:283.9px;top:633.2px;width:1.0px;height:55.3px;background:#f0f0f0"></div>
<div class="a" style="left:391.8px;top:633.2px;width:1.0px;height:55.3px;background:#f0f0f0"></div>
<div class="a" style="left:499.8px;top:633.2px;width:1.0px;height:55.3px;background:#f0f0f0"></div>
<div class="a" style="left:607.9px;top:633.2px;width:1.0px;height:55.3px;background:#f0f0f0"></div>
<div class="a" style="left:715.7px;top:633.2px;width:1.0px;height:55.3px;background:#f0f0f0"></div>
<div class="a" style="left:823.7px;top:633.2px;width:1.0px;height:55.3px;background:#f0f0f0"></div>
<div class="a" style="left:913.9px;top:633.2px;width:1.0px;height:55.3px;background:#f0f0f0"></div>
<div class="a" style="left:1076.1px;top:633.2px;width:1.0px;height:55.3px;background:#f0f0f0"></div>
<div class="a" style="left:1183.9px;top:633.2px;width:1.0px;height:55.3px;background:#f0f0f0"></div>
<div class="a" style="left:1273.9px;top:633.2px;width:1.0px;height:55.3px;background:#f0f0f0"></div>
<div class="a" style="left:1363.9px;top:633.2px;width:1.0px;height:55.3px;background:#f0f0f0"></div>
<div class="a" style="left:1453.9px;top:633.2px;width:1.0px;height:55.3px;background:#f0f0f0"></div>
<div class="a" style="left:1473.6px;top:633.2px;width:7.4px;height:55.3px;background:linear-gradient(90deg,rgba(0,0,0,0.06),rgba(0,0,0,0))"></div>
<div class="t" style="left:157.8px;top:651.7px;font-size:12px;letter-spacing:0.50px;color:#1f1f1f;font-weight:bold;">业务流程编号</div>
<div class="t" style="left:292.8px;top:651.7px;font-size:12px;letter-spacing:0.50px;color:#1f1f1f;font-weight:bold;">支出类型</div>
<div class="t" style="left:400.6px;top:651.7px;font-size:12px;letter-spacing:0.50px;color:#1f1f1f;font-weight:bold;">支出项目</div>
<div class="t" style="left:508.6px;top:651.7px;font-size:12px;letter-spacing:0.50px;color:#1f1f1f;font-weight:bold;">所属科目</div>
<div class="t" style="left:616.7px;top:651.7px;font-size:12px;letter-spacing:0.50px;color:#1f1f1f;font-weight:bold;">支出金额</div>
<div class="t" style="left:725.2px;top:651.7px;font-size:12px;letter-spacing:0.50px;color:#1f1f1f;font-weight:bold;">已付金额</div>
<div class="t" style="left:832.6px;top:651.7px;font-size:12px;letter-spacing:0.50px;color:#1f1f1f;font-weight:bold;">发起人</div>
<div class="t" style="left:922.8px;top:651.7px;font-size:12px;letter-spacing:0.50px;color:#1f1f1f;font-weight:bold;">发起时间</div>
<div class="t" style="left:1085.0px;top:651.7px;font-size:12px;letter-spacing:0.50px;color:#1f1f1f;font-weight:bold;">审批完成时间</div>
<div class="t" style="left:1192.7px;top:651.7px;font-size:12px;letter-spacing:0.50px;color:#1f1f1f;font-weight:bold;">支付状态</div>
<div class="t" style="left:1462.4px;top:651.7px;font-size:12px;letter-spacing:0.50px;color:#1f1f1f;font-weight:bold;">备</div>
<div class="t" style="left:1481.8px;top:651.7px;font-size:12px;letter-spacing:0.50px;color:#1f1f1f;font-weight:bold;">操作</div>
<div class="t" style="left:1282.4px;top:641.8px;font-size:12px;letter-spacing:0.50px;color:#1f1f1f;font-weight:bold;">最近付款人</div>
<div class="t" style="left:1282.4px;top:661.6px;font-size:12px;letter-spacing:0.50px;color:#1f1f1f;font-weight:bold;">员</div>
<div class="t" style="left:1372.4px;top:641.8px;font-size:12px;letter-spacing:0.50px;color:#1f1f1f;font-weight:bold;">最近付款时</div>
<div class="t" style="left:1372.4px;top:661.6px;font-size:12px;letter-spacing:0.50px;color:#1f1f1f;font-weight:bold;">间</div>
<div class="a" style="left:149.4px;top:688.5px;width:1.0px;height:165.1px;background:#f0f0f0"></div>
<div class="a" style="left:1562.6px;top:688.5px;width:1.0px;height:165.1px;background:#f0f0f0"></div>
<div class="a" style="left:149.4px;top:838.0px;width:1414.2px;height:1.0px;background:#f0f0f0"></div>
<div class="a" style="left:150.4px;top:839.0px;width:1412.2px;height:14.6px;background:#fafafa"></div>
<svg class="a" style="left:830px;top:731.8px" width="56" height="36.5" viewBox="0 0 64 41"><g fill="none" fill-rule="evenodd"><ellipse fill="#f5f5f5" cx="32" cy="33" rx="32" ry="7"/><g fill-rule="nonzero" stroke="#d9d9d9"><path d="M55 12.76L44.854 1.258C44.367.474 43.656 0 42.907 0H21.093c-.749 0-1.46.474-1.947 1.257L9 12.761V22h46v-9.24z"/><path d="M41.613 15.931c0-1.605.994-2.93 2.227-2.931H55v18.137C55 33.26 53.68 35 52.05 35h-40.1C10.32 35 9 33.259 9 31.137V13h11.16c1.233 0 2.227 1.323 2.227 2.928v.022c0 1.605 1.005 2.901 2.237 2.901h14.752c1.232 0 2.237-1.308 2.237-2.913v-.007z" fill="#fafafa"/></g></g></svg>
<div class="t" style="left:833.0px;top:774.8px;font-size:12px;letter-spacing:0.50px;color:#bfbfbf;font-weight:normal;">暂无数据</div>
<svg class="a" style="left:154px;top:842px" width="8" height="9" viewBox="0 0 8 9"><path d="M7.5 0.5 V8.5 L0.5 4.5 Z" fill="#8c8c8c" stroke="#8c8c8c" stroke-linejoin="round"/></svg>
<div class="a" style="left:167.6px;top:841.7px;width:1312.6px;height:9.4px;background:#8c8c8c;border-radius:5px"></div>
<svg class="a" style="left:1552px;top:842px" width="8" height="9" viewBox="0 0 8 9"><path d="M0.5 0.5 V8.5 L7.5 4.5 Z" fill="#8c8c8c" stroke="#8c8c8c" stroke-linejoin="round"/></svg>
<div class="t" style="left:1325.3px;top:867.8px;font-size:12px;letter-spacing:0.50px;color:#1f1f1f;font-weight:normal;">共0条</div>
<svg class="a" style="left:1372.5px;top:872.3px" width="12.0" height="12.0" viewBox="0 0 14 14"><path d="M9.5 2 L4.5 7 L9.5 12" fill="none" stroke="#bfbfbf" stroke-width="1.1" stroke-linecap="round" stroke-linejoin="round"/></svg>
<div class="t" style="left:1412.3px;top:868.5px;font-size:12px;letter-spacing:0.50px;color:#1f1f1f;font-weight:normal;">1</div>
<svg class="a" style="left:1444.5px;top:872.3px" width="12.0" height="12.0" viewBox="0 0 14 14"><path d="M4.5 2 L9.5 7 L4.5 12" fill="none" stroke="#bfbfbf" stroke-width="1.1" stroke-linecap="round" stroke-linejoin="round"/></svg>
<div class="a" style="left:1479.2px;top:863.1px;width:84.4px;height:28.4px;border:1px solid #d9d9d9;border-radius:5.4px;background:#fff"></div>
<div class="t" style="left:1490.3px;top:868.5px;font-size:12px;letter-spacing:0.50px;color:#1f1f1f;font-weight:normal;">10 条/页</div>
<svg class="a" style="left:1544.5px;top:871.7px" width="11.6" height="11.6" viewBox="0 0 14 14"><path d="M1.5 3.3 L7 10 L12.5 3.3" fill="none" stroke="#b0b0b0" stroke-width="1.2" stroke-linecap="round" stroke-linejoin="round"/></svg>
<div class="a" style="left:1584.0px;top:410.0px;width:46.0px;height:491.0px;background:linear-gradient(90deg,#9d8d7a 0,#9d8d7a 1px,#c9b89d 1px,#d6c4aa 10px,#dccbb0 18px,#ddccb2 100%)"></div>
<div class="a" style="left:0.0px;top:409.7px;width:1630.0px;height:1.5px;background:#2f7ff5"></div>
<div class="a" style="left:0.0px;top:411.2px;width:1630.0px;height:11.8px;background:linear-gradient(180deg,rgba(40,120,245,0.55),rgba(40,120,245,0.15) 45%,rgba(40,120,245,0) 100%)"></div>
<div class="a" style="left:1495px;top:891px;font-size:20px;line-height:24px;color:rgba(110,110,110,0.65);white-space:nowrap">激活 Windows</div>
<div class="a" style="left:186.7px;top:186.5px;font-size:13.2px;line-height:13.2px;color:rgba(0,0,0,0.1);white-space:nowrap;transform-origin:0 100%;transform:rotate(-18deg)">江言 2025-09-12 09:53</div>
<div class="a" style="left:511px;top:186.5px;font-size:13.2px;line-height:13.2px;color:rgba(0,0,0,0.1);white-space:nowrap;transform-origin:0 100%;transform:rotate(-18deg)">江言 2025-09-12 09:53</div>
<div class="a" style="left:835px;top:186.5px;font-size:13.2px;line-height:13.2px;color:rgba(0,0,0,0.1);white-space:nowrap;transform-origin:0 100%;transform:rotate(-18deg)">江言 2025-09-12 09:53</div>
<div class="a" style="left:1159px;top:186.5px;font-size:13.2px;line-height:13.2px;color:rgba(0,0,0,0.1);white-space:nowrap;transform-origin:0 100%;transform:rotate(-18deg)">江言 2025-09-12 09:53</div>
<div class="a" style="left:1483.4px;top:186.5px;font-size:13.2px;line-height:13.2px;color:rgba(0,0,0,0.1);white-space:nowrap;transform-origin:0 100%;transform:rotate(-18deg)">江言 2025-09-12 09:53</div>
<div class="a" style="left:186.7px;top:349px;font-size:13.2px;line-height:13.2px;color:rgba(0,0,0,0.1);white-space:nowrap;transform-origin:0 100%;transform:rotate(-18deg)">江言 2025-09-12 09:53</div>
<div class="a" style="left:511px;top:349px;font-size:13.2px;line-height:13.2px;color:rgba(0,0,0,0.1);white-space:nowrap;transform-origin:0 100%;transform:rotate(-18deg)">江言 2025-09-12 09:53</div>
<div class="a" style="left:835px;top:349px;font-size:13.2px;line-height:13.2px;color:rgba(0,0,0,0.1);white-space:nowrap;transform-origin:0 100%;transform:rotate(-18deg)">江言 2025-09-12 09:53</div>
<div class="a" style="left:1159px;top:349px;font-size:13.2px;line-height:13.2px;color:rgba(0,0,0,0.1);white-space:nowrap;transform-origin:0 100%;transform:rotate(-18deg)">江言 2025-09-12 09:53</div>
<div class="a" style="left:1483.4px;top:349px;font-size:13.2px;line-height:13.2px;color:rgba(0,0,0,0.1);white-space:nowrap;transform-origin:0 100%;transform:rotate(-18deg)">江言 2025-09-12 09:53</div>
<div class="a" style="left:203.6px;top:547.2px;font-size:14.7px;line-height:14.7px;color:rgba(0,0,0,0.1);white-space:nowrap;transform-origin:0 100%;transform:rotate(-18deg)">江言 2025-09-12 09:54</div>
<div class="a" style="left:564.4px;top:547.2px;font-size:14.7px;line-height:14.7px;color:rgba(0,0,0,0.1);white-space:nowrap;transform-origin:0 100%;transform:rotate(-18deg)">江言 2025-09-12 09:54</div>
<div class="a" style="left:924px;top:547.2px;font-size:14.7px;line-height:14.7px;color:rgba(0,0,0,0.1);white-space:nowrap;transform-origin:0 100%;transform:rotate(-18deg)">江言 2025-09-12 09:54</div>
<div class="a" style="left:1284.3px;top:547.2px;font-size:14.7px;line-height:14.7px;color:rgba(0,0,0,0.1);white-space:nowrap;transform-origin:0 100%;transform:rotate(-18deg)">江言 2025-09-12 09:54</div>
<div class="a" style="left:203.6px;top:727.8px;font-size:14.7px;line-height:14.7px;color:rgba(0,0,0,0.1);white-space:nowrap;transform-origin:0 100%;transform:rotate(-18deg)">江言 2025-09-12 09:54</div>
<div class="a" style="left:564.4px;top:727.8px;font-size:14.7px;line-height:14.7px;color:rgba(0,0,0,0.1);white-space:nowrap;transform-origin:0 100%;transform:rotate(-18deg)">江言 2025-09-12 09:54</div>
<div class="a" style="left:924px;top:727.8px;font-size:14.7px;line-height:14.7px;color:rgba(0,0,0,0.1);white-space:nowrap;transform-origin:0 100%;transform:rotate(-18deg)">江言 2025-09-12 09:54</div>
<div class="a" style="left:1284.3px;top:727.8px;font-size:14.7px;line-height:14.7px;color:rgba(0,0,0,0.1);white-space:nowrap;transform-origin:0 100%;transform:rotate(-18deg)">江言 2025-09-12 09:54</div>
<div class="a" style="left:203.6px;top:908.4px;font-size:14.7px;line-height:14.7px;color:rgba(0,0,0,0.1);white-space:nowrap;transform-origin:0 100%;transform:rotate(-18deg)">江言 2025-09-12 09:54</div>
<div class="a" style="left:564.4px;top:908.4px;font-size:14.7px;line-height:14.7px;color:rgba(0,0,0,0.1);white-space:nowrap;transform-origin:0 100%;transform:rotate(-18deg)">江言 2025-09-12 09:54</div>
<div class="a" style="left:924px;top:908.4px;font-size:14.7px;line-height:14.7px;color:rgba(0,0,0,0.1);white-space:nowrap;transform-origin:0 100%;transform:rotate(-18deg)">江言 2025-09-12 09:54</div>
<div class="a" style="left:1284.3px;top:908.4px;font-size:14.7px;line-height:14.7px;color:rgba(0,0,0,0.1);white-space:nowrap;transform-origin:0 100%;transform:rotate(-18deg)">江言 2025-09-12 09:54</div>
<div class="a" style="left:135px;top:240px;width:1402px;height:86px;border:4px solid #ff0000;border-radius:25px"></div>
<svg class="a" style="left:0;top:0" width="1630" height="901" viewBox="0 0 1630 901"><path d="M904.6 350.4 L840 521 L846 523.3 L829 537.5 L827.5 516 L833.4 518.4 Z" fill="#ff0000"/></svg>
<svg class="a" style="left:0;top:0" width="1630" height="901"><g font-family="Liberation Sans, sans-serif" font-size="55" font-weight="bold" letter-spacing="-0.4"><text x="366" y="619.8" fill="#fff" stroke="#fff" stroke-width="8" stroke-linejoin="round">成功退款的押金记录未同步到支出付款<tspan dx="2.6" font-size="58">!</tspan></text><text x="366" y="619.8" fill="#ff1000" stroke="#ff1000" stroke-width="1.4" stroke-linejoin="round">成功退款的押金记录未同步到支出付款<tspan dx="2.6" font-size="58">!</tspan></text></g></svg>
</body></html>
